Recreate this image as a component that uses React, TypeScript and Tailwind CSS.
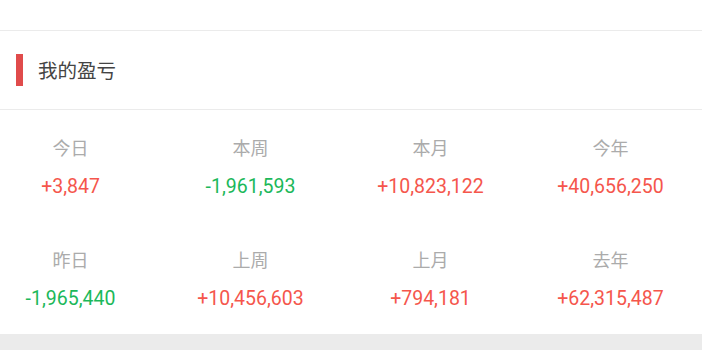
import React from "react";

interface Stat {
  label: string;
  value: string;
}

const ROWS: Stat[][] = [
  [
    { label: "今日", value: "+3,847" },
    { label: "本周", value: "-1,961,593" },
    { label: "本月", value: "+10,823,122" },
    { label: "今年", value: "+40,656,250" },
  ],
  [
    { label: "昨日", value: "-1,965,440" },
    { label: "上周", value: "+10,456,603" },
    { label: "上月", value: "+794,181" },
    { label: "去年", value: "+62,315,487" },
  ],
];

const StatCell: React.FC<{ stat: Stat }> = ({ stat }) => {
  const negative = stat.value.startsWith("-");
  return (
    <div className="flex flex-col items-center pt-[26px] pb-[22px]">
      <div className="text-[18px] leading-[25px] text-[#ababab]">{stat.label}</div>
      <div
        className={
          negative
            ? "mt-[13px] text-[19.5px] leading-[26px] text-[#1bb85a]"
            : "mt-[13px] text-[19.5px] leading-[26px] text-[#f5564c]"
        }
      >
        {stat.value}
      </div>
    </div>
  );
};

export default function App() {
  return (
    <div
      className="w-[702px] h-[364px] bg-white overflow-hidden"
      style={{ fontFamily: "Roboto, 'Noto Sans CJK SC', sans-serif" }}
    >
      <div className="h-[31px] border-b border-[#ebebeb]" />
      <div className="h-[79px] flex items-center border-b border-[#ebebeb]">
        <div className="ml-4 w-[7px] h-[32px] bg-[#e04b4b]" />
        <div className="ml-[15px] pt-[3px] text-[19.5px] text-[#444]">我的盈亏</div>
      </div>
      <div className="w-[720px] -ml-[19.5px]">
        {ROWS.map((row, i) => (
          <div key={i} className="grid grid-cols-4">
            {row.map((stat) => (
              <StatCell key={stat.label} stat={stat} />
            ))}
          </div>
        ))}
      </div>
      <div className="h-[16px] bg-[#ebebeb]" />
    </div>
  );
}
